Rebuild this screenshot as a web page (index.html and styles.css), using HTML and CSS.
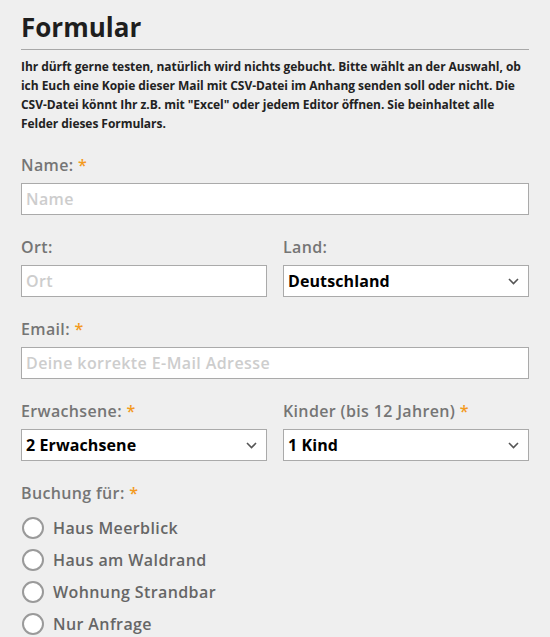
FILE: index.html
```html
<!DOCTYPE html>
<html lang="de">
<head>
<meta charset="utf-8">
<title>Formular</title>
<link rel="stylesheet" href="styles.css">
</head>
<body>
<main class="form-wrap">
  <h1 class="title">Formular</h1>
  <hr class="rule">
  <p class="intro">Ihr dürft gerne testen, natürlich wird nichts gebucht. Bitte wählt an der Auswahl, ob ich Euch eine Kopie dieser Mail mit CSV-Datei im Anhang senden soll oder nicht. Die CSV-Datei könnt Ihr z.B. mit "Excel" oder jedem Editor öffnen. Sie beinhaltet alle Felder dieses Formulars.</p>

  <div class="field">
    <label class="label">Name: <span class="req">*</span></label>
    <input class="input" type="text" placeholder="Name">
  </div>

  <div class="row">
    <div class="field">
      <label class="label">Ort:</label>
      <input class="input" type="text" placeholder="Ort">
    </div>
    <div class="field">
      <label class="label">Land:</label>
      <div class="select">
        <span class="select-value">Deutschland</span>
        <svg class="chev" width="11" height="7" viewBox="0 0 11 7"><path d="M1 1l4.5 4.5L10 1" fill="none" stroke="#555" stroke-width="1.6"/></svg>
      </div>
    </div>
  </div>

  <div class="field">
    <label class="label">Email: <span class="req">*</span></label>
    <input class="input" type="text" placeholder="Deine korrekte E-Mail Adresse">
  </div>

  <div class="row">
    <div class="field">
      <label class="label">Erwachsene: <span class="req">*</span></label>
      <div class="select">
        <span class="select-value">2 Erwachsene</span>
        <svg class="chev" width="11" height="7" viewBox="0 0 11 7"><path d="M1 1l4.5 4.5L10 1" fill="none" stroke="#555" stroke-width="1.6"/></svg>
      </div>
    </div>
    <div class="field">
      <label class="label">Kinder (bis 12 Jahren) <span class="req">*</span></label>
      <div class="select">
        <span class="select-value">1 Kind</span>
        <svg class="chev" width="11" height="7" viewBox="0 0 11 7"><path d="M1 1l4.5 4.5L10 1" fill="none" stroke="#555" stroke-width="1.6"/></svg>
      </div>
    </div>
  </div>

  <div class="field radios">
    <span class="label">Buchung für: <span class="req">*</span></span>
    <div class="radio-list">
      <label class="radio"><span class="circle"></span>Haus Meerblick</label>
      <label class="radio"><span class="circle"></span>Haus am Waldrand</label>
      <label class="radio"><span class="circle"></span>Wohnung Strandbar</label>
      <label class="radio"><span class="circle"></span>Nur Anfrage</label>
    </div>
  </div>
</main>
</body>
</html>
```
FILE: styles.css
```css
* { box-sizing: border-box; }
html, body { margin: 0; padding: 0; background: #efefef; }
body { font-family: "Open Sans", "Liberation Sans", sans-serif; }

.form-wrap {
  width: 508px;
  margin-left: 21px;
  padding-top: 10px;
}

.title {
  margin: 0;
  font-size: 26px;
  line-height: 34px;
  font-weight: 700;
  color: #1e1e1e;
}

.rule {
  margin: 5px 0 0;
  border: 0;
  border-top: 1px solid #a8a8a8;
  height: 0;
}

.intro {
  margin: 7px 0 0;
  font-size: 12px;
  line-height: 19px;
  font-weight: 700;
  letter-spacing: -0.05px;
  color: #222;
}

.field {
  display: flex;
  flex-direction: column;
  gap: 8px;
  margin-top: 22px;
  min-width: 0;
}

.row {
  display: grid;
  grid-template-columns: 1fr 1fr;
  column-gap: 16px;
}

.label {
  display: block;
  font-size: 16px;
  line-height: 20px;
  font-weight: 600;
  letter-spacing: 0.35px;
  color: #757575;
}
.req { color: #f39a1e; }

.input, .select {
  height: 32px;
  width: 100%;
  border: 1px solid #aaa;
  background: #fff;
  font-family: inherit;
  font-size: 16px;
  font-weight: 600;
  letter-spacing: 0.4px;
  padding: 0 4px;
  margin: 0;
  outline: none;
}
.input::placeholder { color: #cdcdcd; opacity: 1; }

.select {
  display: flex;
  align-items: center;
  justify-content: space-between;
  padding-right: 9px;
}
.select-value { color: #000; font-weight: 700; letter-spacing: 0.1px; }
.chev { display: block; }

.radios { gap: 9px; }
.radio-list { display: flex; flex-direction: column; }
.radio {
  display: flex;
  align-items: center;
  height: 32px;
  gap: 9px;
  font-size: 16px;
  font-weight: 600;
  letter-spacing: 0.4px;
  color: #666;
}
.circle {
  width: 22px;
  height: 22px;
  border-radius: 50%;
  border: 2px solid #9a9a9a;
  background: #fff;
  margin-left: 1px;
}
```
